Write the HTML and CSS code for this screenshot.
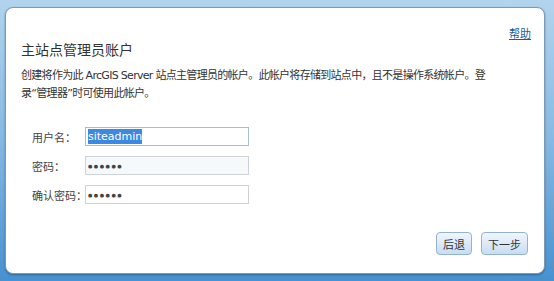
FILE: index.html
```html
<!DOCTYPE html>
<html lang="zh-CN">

<head>
    <meta charset="UTF-8">
    <meta name="viewport" content="width=device-width, initial-scale=1.0">
    <title>主站点管理员账户</title>
    <link rel="stylesheet" href="styles.css">
</head>

<body>
    <div class="dialog">
        <div class="helpbar">
            <a class="help" href="#">帮助</a>
        </div>
        <h2 class="title">主站点管理员账户</h2>
        <p class="desc">创建将作为此 ArcGIS Server 站点主管理员的帐户。此帐户将存储到站点中，且不是操作系统帐户。登录“管理器”时可使用此帐户。</p>

        <div class="form">
            <div class="row">
                <label class="label">用户名：</label>
                <div class="field focused"><span class="sel">siteadmin</span></div>
            </div>
            <div class="row">
                <label class="label">密码：</label>
                <div class="field tinted"><span class="dots">●●●●●●</span></div>
            </div>
            <div class="row">
                <label class="label">确认密码：</label>
                <div class="field"><span class="dots">●●●●●●</span></div>
            </div>
        </div>

        <div class="footer">
            <button class="btn">后退</button>
            <button class="btn">下一步</button>
        </div>
    </div>
</body>

</html>
```

FILE: styles.css
```css
html, body {
    height: 100%;
}

body {
    margin: 0;
    padding: 7px 9px 7px 5px;
    box-sizing: border-box;
    font-family: "DejaVu Sans", "Noto Sans CJK SC", sans-serif;
    color: #333333;
    background: linear-gradient(to bottom, #b2d4ee, #86b9e2 50%, #4791d0);
}

.dialog {
    display: flex;
    flex-direction: column;
    height: 267px;
    box-sizing: border-box;
    padding: 18px 13px 18px 15px;
    background: #ffffff;
    border: 1px solid #7c9ab5;
    border-radius: 8px;
    box-shadow: 0 1px 2px rgba(20, 60, 100, 0.5);
}

.helpbar {
    display: flex;
    justify-content: flex-end;
}

.help {
    font-family: "Noto Sans CJK SC", sans-serif;
    font-size: 11px;
    line-height: 14px;
    color: #1d5c96;
    text-decoration: underline;
}

.title {
    margin: 0;
    font-family: "Noto Sans CJK SC", sans-serif;
    font-size: 14px;
    line-height: 18px;
    font-weight: 400;
    color: #333333;
}

.desc {
    margin: 9px 0 0;
    width: 470px;
    font-family: "DejaVu Sans", "Noto Sans CJK SC", sans-serif;
    font-size: 11px;
    letter-spacing: -0.7px;
    line-height: 18px;
    color: #333333;
}

.form {
    display: flex;
    flex-direction: column;
    gap: 10px;
    margin-top: 24px;
    padding-left: 11px;
}

.row {
    display: flex;
    align-items: center;
}

.label {
    width: 53px;
    font-family: "Noto Sans CJK SC", sans-serif;
    font-size: 11px;
    color: #444444;
    white-space: nowrap;
}

.field {
    display: flex;
    align-items: center;
    width: 164px;
    height: 19px;
    box-sizing: border-box;
    padding: 0 2px;
    border: 1px solid #cfd3d7;
    background: #ffffff;
    font-size: 11px;
}

.field.focused {
    border-color: #a8bdd2;
}

.field.tinted {
    background: #f5f9fc;
}

.sel {
    background: #3b89e3;
    color: #ffffff;
    line-height: 15px;
}

.dots {
    font-size: 5px;
    letter-spacing: 1.5px;
    color: #444444;
}

.footer {
    display: flex;
    justify-content: flex-end;
    gap: 9px;
    padding-right: 3px;
    margin-top: auto;
}

.btn {
    height: 23px;
    padding: 0 6px;
    font-family: "Noto Sans CJK SC", sans-serif;
    font-size: 11px;
    color: #333333;
    background: linear-gradient(to bottom, #f0f6fc, #c8ddf1);
    border: 1px solid #93b3d1;
    border-radius: 4px;
}
```
